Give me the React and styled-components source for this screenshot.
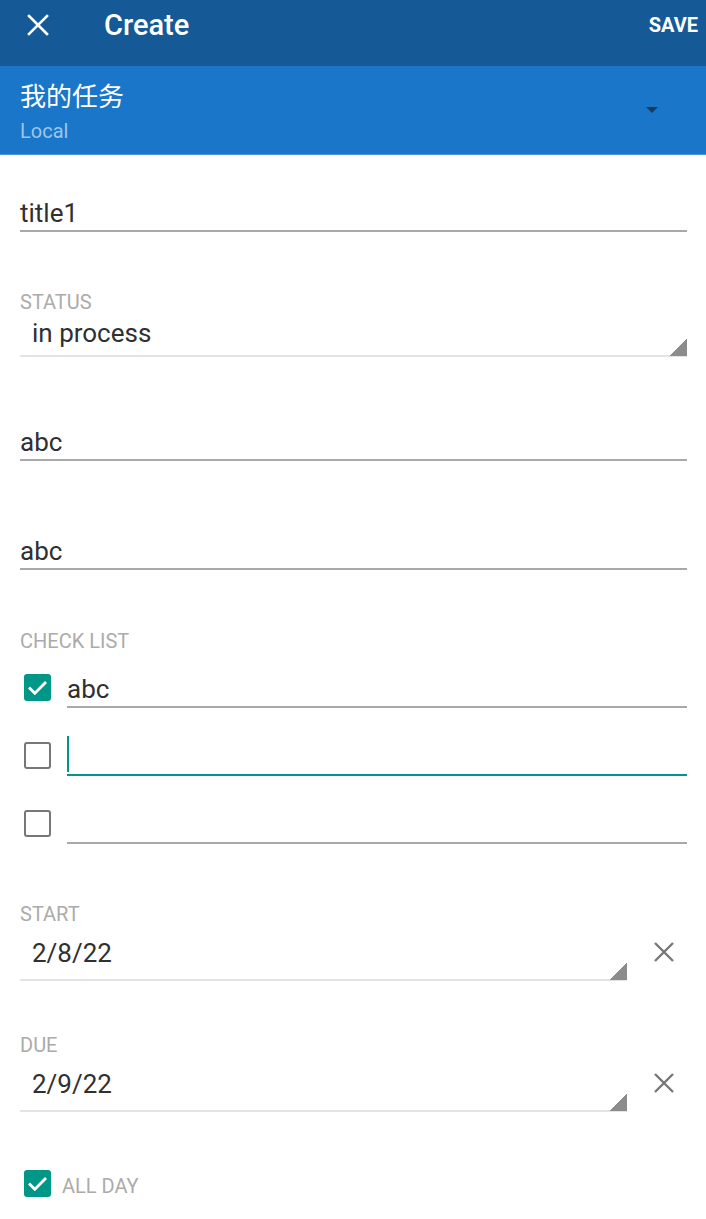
import React from "react";
import styled, { createGlobalStyle } from "styled-components";

const GlobalStyle = createGlobalStyle`
  html, body { margin: 0; padding: 0; background: #ffffff; }
  body { font-family: Roboto, "Noto Sans CJK SC", sans-serif; overflow: hidden; }
  * { box-sizing: border-box; }
`;

const Page = styled.div`
  width: 706px;
  min-height: 1219px;
  background: #fff;
`;

const Toolbar = styled.header`
  height: 66px;
  background: #155a96;
  display: flex;
  align-items: center;
  padding: 0 8px 16px 27px;
  color: #fff;
`;

const IconButton = styled.button`
  border: 0;
  background: transparent;
  padding: 0;
  width: 22px;
  height: 22px;
  display: flex;
  align-items: center;
  justify-content: center;
  cursor: pointer;
`;

const ToolbarTitle = styled.h1`
  margin: 0 0 0 55px;
  font-size: 29px;
  font-weight: 500;
  flex: 1;
  line-height: 32px;
`;

const SaveButton = styled.button`
  border: 0;
  background: transparent;
  color: #fff;
  font-family: Roboto, sans-serif;
  font-weight: 700;
  font-size: 20px;
  padding: 0;
  cursor: pointer;
`;

const ListHeader = styled.div`
  height: 89px;
  background: #1976c8;
  border-bottom: 1px solid #4d95d6;
  display: flex;
  align-items: center;
  justify-content: space-between;
  padding: 0 48px 0 20px;
`;

const ListInfo = styled.div`
  display: flex;
  flex-direction: column;
  padding-top: 3px;
`;

const ListName = styled.div`
  color: #fff;
  font-size: 26px;
  line-height: 30px;
`;

const ListSource = styled.div`
  color: #9ec5e8;
  font-size: 20px;
  line-height: 22px;
  margin-top: 8px;
`;

const Caret = styled.div`
  width: 0;
  height: 0;
  border-left: 6.5px solid transparent;
  border-right: 6.5px solid transparent;
  border-top: 6px solid #1b3b5e;
`;

const Form = styled.main`
  padding: 0 19px 0 20px;
  display: flex;
  flex-direction: column;
`;

const TextInput = styled.div`
  margin-top: ${(p) => p.$gap}px;
  height: 36px;
  font-size: 26px;
  line-height: 34px;
  color: #303030;
  border-bottom: 2px solid ${(p) => (p.$focused ? "#009688" : "#a9a9a9")};
  flex: 1;
  white-space: nowrap;
`;

const FieldLabel = styled.div`
  margin-top: ${(p) => p.$gap}px;
  font-size: 20px;
  line-height: 24px;
  color: #ababab;
  text-transform: uppercase;
`;

const SelectBox = styled.div`
  position: relative;
  margin-top: ${(p) => p.$gap || 0}px;
  padding: 0 0 ${(p) => p.$pad}px 12px;
  font-size: 26px;
  line-height: 34px;
  color: #303030;
  border-bottom: 2px solid #e4e4e4;
  flex: 1;
`;

const CornerMark = styled.span`
  position: absolute;
  right: 0;
  bottom: -1px;
  width: 18px;
  height: 18px;
  background: linear-gradient(to bottom right, transparent 50%, #8c8c8c 50%);
`;

const CheckRow = styled.div`
  margin-top: ${(p) => p.$gap}px;
  display: flex;
  align-items: center;
`;

const Box = styled.span`
  width: 27px;
  height: 27px;
  margin: 0 ${(p) => p.$space}px 5px 4px;
  border-radius: 3px;
  flex: none;
  display: flex;
  align-items: center;
  justify-content: center;
  background: ${(p) => (p.$checked ? "#009688" : "transparent")};
  border: ${(p) => (p.$checked ? "none" : "2.5px solid #777")};
`;

const CaretLine = styled.span`
  display: inline-block;
  width: 2px;
  height: 36px;
  background: #009688;
  vertical-align: top;
  margin-top: -4px;
`;

const DateRow = styled.div`
  margin-top: 10px;
  display: flex;
  align-items: flex-start;
`;

const ClearButton = styled.button`
  border: 0;
  background: transparent;
  padding: 0;
  width: 24px;
  height: 24px;
  margin: 4px 11px 0 25px;
  display: flex;
  align-items: center;
  justify-content: center;
  cursor: pointer;
`;

const AllDayRow = styled.div`
  margin-top: 58px;
  display: flex;
  align-items: center;
`;

const AllDayText = styled.span`
  font-size: 20px;
  line-height: 28px;
  padding-top: 0;
  color: #ababab;
`;

const Divider = styled.div`
  margin: 19px -19px 0 -20px;
  height: 1px;
  background: #eeeeee;
`;

const CloseIcon = ({ size = 22, color = "#fff", width = 2.6 }) => (
  <svg width={size} height={size} viewBox="0 0 22 22">
    <path d="M2 2 L20 20 M20 2 L2 20" stroke={color} strokeWidth={width} strokeLinecap="square" fill="none" />
  </svg>
);

const Check = () => (
  <svg width="25" height="25" viewBox="0 0 25 25">
    <path d="M4 12.5 L9.8 18.3 L21 7" stroke="#fff" strokeWidth="2.8" fill="none" />
  </svg>
);

const CheckBox = ({ checked, space = 16 }) => (
  <Box $checked={checked} $space={space}>{checked && <Check />}</Box>
);

const DateField = ({ label, value, gap }) => (
  <>
    <FieldLabel $gap={gap}>{label}</FieldLabel>
    <DateRow>
      <SelectBox $pad={9}>
        {value}
        <CornerMark />
      </SelectBox>
      <ClearButton aria-label="clear">
        <svg width="22" height="22" viewBox="0 0 22 22">
          <path d="M2 2 L20 20 M20 2 L2 20" stroke="#777" strokeWidth="2.4" fill="none" />
        </svg>
      </ClearButton>
    </DateRow>
  </>
);

export default function App() {
  return (
    <Page>
      <GlobalStyle />
      <Toolbar>
        <IconButton aria-label="close">
          <CloseIcon />
        </IconButton>
        <ToolbarTitle>Create</ToolbarTitle>
        <SaveButton>SAVE</SaveButton>
      </Toolbar>
      <ListHeader>
        <ListInfo>
          <ListName>我的任务</ListName>
          <ListSource>Local</ListSource>
        </ListInfo>
        <Caret />
      </ListHeader>
      <Form>
        <TextInput $gap={41}>title1</TextInput>

        <FieldLabel $gap={58}>Status</FieldLabel>
        <SelectBox $gap={2} $pad={5}>
          in process
          <CornerMark />
        </SelectBox>

        <TextInput $gap={68}>abc</TextInput>
        <TextInput $gap={73}>abc</TextInput>

        <FieldLabel $gap={59}>Check list</FieldLabel>
        <CheckRow $gap={19}>
          <CheckBox checked />
          <TextInput $gap={0}>abc</TextInput>
        </CheckRow>
        <CheckRow $gap={32}>
          <CheckBox />
          <TextInput $gap={0} $focused>
            <CaretLine />
          </TextInput>
        </CheckRow>
        <CheckRow $gap={32}>
          <CheckBox />
          <TextInput $gap={0} />
        </CheckRow>

        <DateField label="Start" value="2/8/22" gap={58} />
        <DateField label="Due" value="2/9/22" gap={52} />

        <AllDayRow>
          <CheckBox checked space={11} />
          <AllDayText>ALL DAY</AllDayText>
        </AllDayRow>
        <Divider />
      </Form>
    </Page>
  );
}
